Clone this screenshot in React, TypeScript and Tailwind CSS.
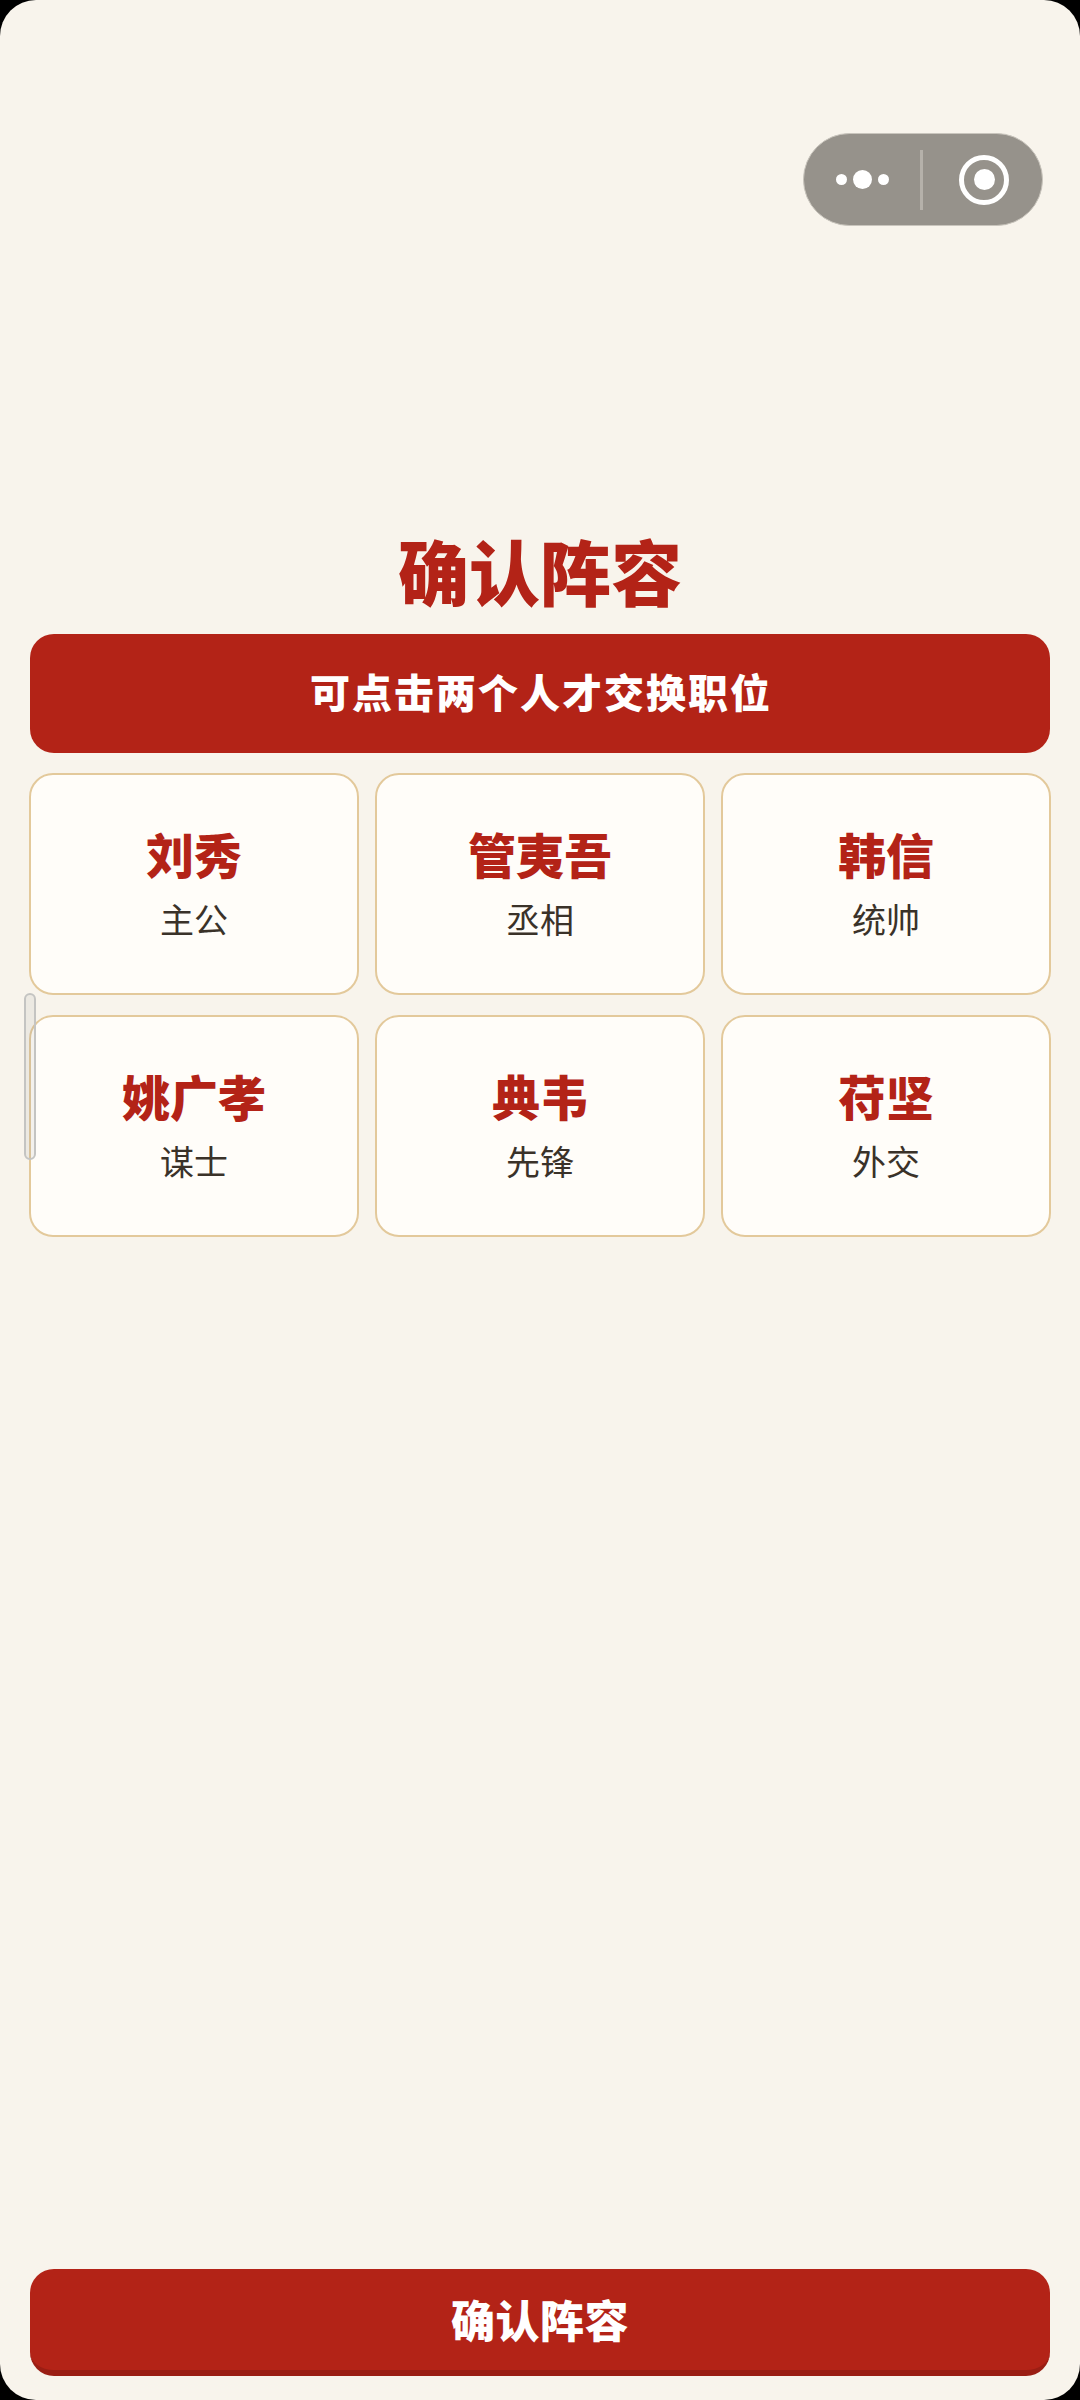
const cjk = "font-['Noto_Sans_CJK_SC','Noto_Sans',sans-serif]";

const members = [
  { name: "刘秀", role: "主公" },
  { name: "管夷吾", role: "丞相" },
  { name: "韩信", role: "统帅" },
  { name: "姚广孝", role: "谋士" },
  { name: "典韦", role: "先锋" },
  { name: "苻坚", role: "外交" },
];

const CapsuleMenu = () => {
  return (
    <div className="absolute right-[37px] top-[133px] flex h-[93px] w-[240px] items-center rounded-full border border-[#c9c5bd] bg-[#96928b]">
      <div className="flex flex-1 items-center justify-center gap-[6px]">
        <span className="h-[11px] w-[11px] rounded-full bg-white" />
        <span className="h-[19px] w-[19px] rounded-full bg-white" />
        <span className="h-[11px] w-[11px] rounded-full bg-white" />
      </div>
      <div className="h-[60px] w-[3px] bg-[#b5b1aa]" />
      <div className="flex flex-1 items-center justify-center pl-[3px]">
        <div className="flex h-[50px] w-[50px] items-center justify-center rounded-full border-[5px] border-white">
          <span className="h-[21px] w-[21px] rounded-full bg-white" />
        </div>
      </div>
    </div>
  );
};

const MemberCard = ({ name, role }: { name: string; role: string }) => {
  return (
    <div className="flex h-[222px] flex-col items-center justify-center rounded-[24px] border-[2.5px] border-[#e3c99b] bg-[#fffdf9] pb-[6px]">
      <div className="text-[48px] font-black leading-[64px] text-[#b32317]">{name}</div>
      <div className="mt-[11px] text-[34px] leading-[46px] text-[#3a3229]">{role}</div>
    </div>
  );
};

export default function App() {
  return (
    <div className="h-[2400px] w-[1080px] bg-black">
      <div className={`relative flex h-full flex-col overflow-hidden rounded-[36px] bg-[#f8f4ec] ${cjk}`}>
        <CapsuleMenu />

        <h1 className="pt-[519px] text-center text-[71px] font-black leading-[100px] text-[#b32317]">
          确认阵容
        </h1>

        <div className="mx-[30px] mt-[15px] flex h-[119px] items-center justify-center rounded-[24px] bg-[#b32317] pb-[5px] pl-[2px] text-[40px] font-black tracking-[2px] text-white">
          可点击两个人才交换职位
        </div>

        <div className="ml-[29px] mr-[29px] mt-[20px] grid grid-cols-3 gap-x-[16px] gap-y-[20px]">
          {members.map((m) => (
            <MemberCard key={m.name} name={m.name} role={m.role} />
          ))}
        </div>

        <div className="absolute left-[24px] top-[993px] h-[167px] w-[12px] rounded-full border-2 border-[#c4c4c2] bg-[#8a8a8a]/10" />

        <button className={`mx-[30px] mb-[24px] mt-auto flex h-[107px] items-center justify-center rounded-[24px] border-b-[6px] border-[#9a1e14] bg-[#b32317] pb-[2px] text-[44px] font-black tracking-[0.5px] text-white ${cjk}`}>
          确认阵容
        </button>
      </div>
    </div>
  );
}
